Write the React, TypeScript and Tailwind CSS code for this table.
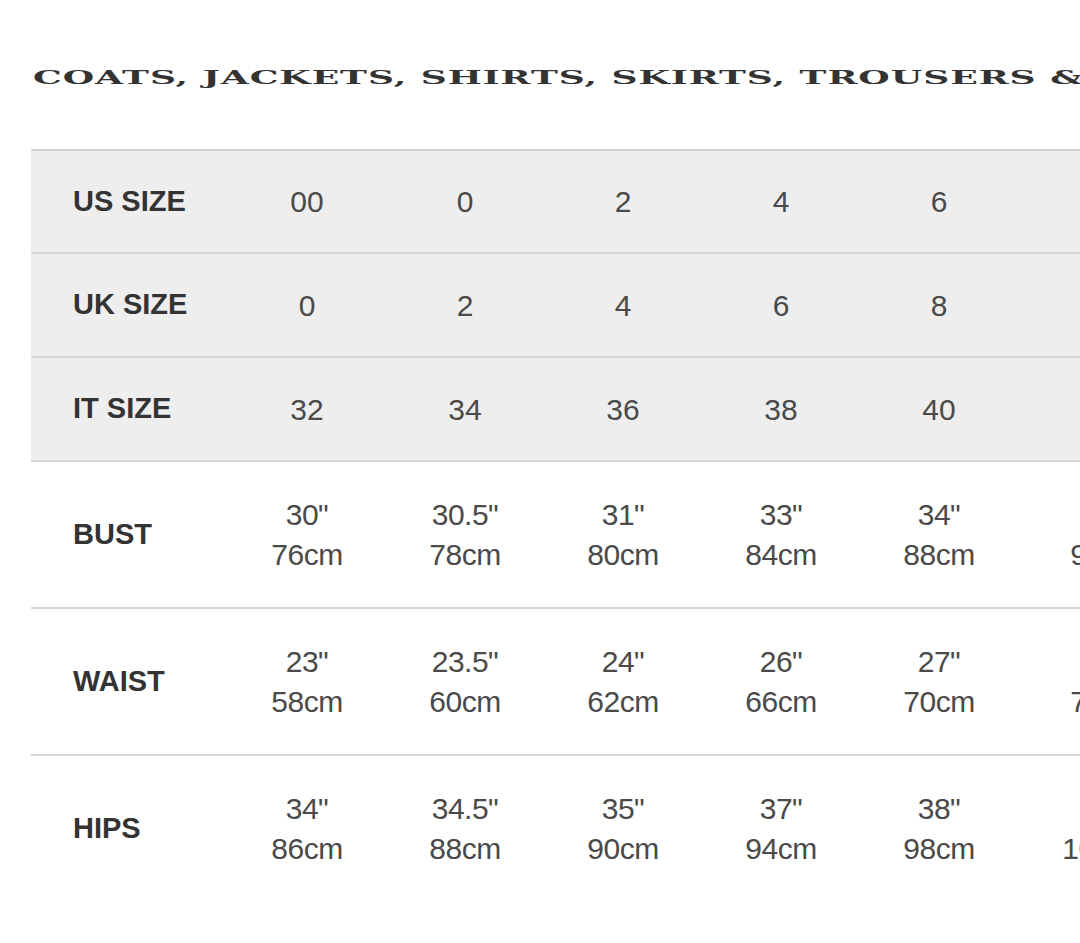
const sizeRows = [
  { label: "US SIZE", values: ["00", "0", "2", "4", "6", "8", "10"] },
  { label: "UK SIZE", values: ["0", "2", "4", "6", "8", "10", "12"] },
  { label: "IT SIZE", values: ["32", "34", "36", "38", "40", "42", "44"] },
];

const measureRows = [
  {
    label: "BUST",
    values: [
      ["30\"", "76cm"],
      ["30.5\"", "78cm"],
      ["31\"", "80cm"],
      ["33\"", "84cm"],
      ["34\"", "88cm"],
      ["36\"", "92cm"],
      ["38\"", "96cm"],
    ],
  },
  {
    label: "WAIST",
    values: [
      ["23\"", "58cm"],
      ["23.5\"", "60cm"],
      ["24\"", "62cm"],
      ["26\"", "66cm"],
      ["27\"", "70cm"],
      ["29\"", "74cm"],
      ["30\"", "78cm"],
    ],
  },
  {
    label: "HIPS",
    values: [
      ["34\"", "86cm"],
      ["34.5\"", "88cm"],
      ["35\"", "90cm"],
      ["37\"", "94cm"],
      ["38\"", "98cm"],
      ["40\"", "102cm"],
      ["42\"", "106cm"],
    ],
  },
];

const sans = "font-['Liberation_Sans',Arial,sans-serif]";
const cols = "grid-cols-[197px_repeat(5,158px)_176px_158px]";

export default function App() {
  return (
    <div className="w-[1080px] h-[943px] overflow-hidden bg-white">
      {/* Title */}
      <div className="h-[149px] pl-[33px] pt-[64px] whitespace-nowrap">
        <h1 className="inline-block origin-left scale-x-[1.9] font-['DejaVu_Serif',serif] text-[19px] font-bold leading-[26px] tracking-[0.5px] text-[#333333]">
          COATS, JACKETS, SHIRTS, SKIRTS, TROUSERS &amp; DRESSES
        </h1>
      </div>

      {/* Size table */}
      <div className={`ml-[31px] w-[1300px] ${sans}`}>
        {sizeRows.map((row, i) => (
          <div
            key={row.label}
            className={`grid ${cols} items-center border-t-2 bg-[#eeeeee] ${
              i === 0 ? "h-[103px] border-[#d0d0d0]" : "h-[104px] border-[#d6d6d6]"
            }`}
          >
            <span className="pl-[42px] text-[29px] font-bold text-[#333333]">
              {row.label}
            </span>
            {row.values.map((v, j) => (
              <span key={j} className="text-center text-[30px] text-[#4a4a4a]">
                {v}
              </span>
            ))}
          </div>
        ))}

        {measureRows.map((row) => (
          <div
            key={row.label}
            className={`grid h-[147px] ${cols} items-center border-t-2 border-[#d6d6d6] bg-white`}
          >
            <span className="pl-[42px] text-[29px] font-bold text-[#333333]">
              {row.label}
            </span>
            {row.values.map(([inch, cm], j) => (
              <div key={j} className="flex flex-col items-center text-[30px] leading-[40px] tracking-[-0.5px] text-[#4a4a4a]">
                <span>{inch}</span>
                <span>{cm}</span>
              </div>
            ))}
          </div>
        ))}
      </div>
    </div>
  );
}
